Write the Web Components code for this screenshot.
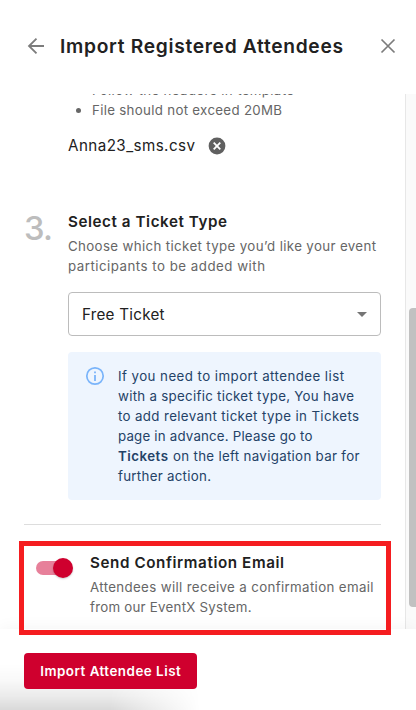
<!DOCTYPE html>
<html lang="en">
<head>
<meta charset="utf-8">
<title>Import Registered Attendees</title>
<style>
html,body{margin:0;height:100%;background:#fff;overflow:hidden}
body{font-family:Inter,"Liberation Sans",sans-serif;color:#212121}
</style>
</head>
<body>
<import-dialog></import-dialog>
<script>
function define(name, html, setup) {
  const template = document.createElement('template');
  template.innerHTML = html.trim();
  customElements.define(name, class extends HTMLElement {
    constructor() {
      super();
      this.attachShadow({ mode: 'open' }).append(template.content.cloneNode(true));
    }
    connectedCallback() { if (setup) setup(this); }
  });
}

// One line of text, tracked so that it spans the width in its "w" attribute.
define('text-line', `<style>:host{display:flex;white-space:pre;line-height:inherit}
span{display:block;flex:none}</style><span><slot></slot></span>`, el => {
  const span = el.shadowRoot.querySelector('span');
  const target = parseFloat(el.getAttribute('w'));
  const gaps = el.textContent.length - 1;
  const spacing = (target - span.getBoundingClientRect().width) / gaps;
  span.style.letterSpacing = spacing.toFixed(4) + 'px';
  span.style.marginRight = (-spacing).toFixed(4) + 'px';
});

define('dialog-header', `
<style>
:host{display:flex;align-items:center;box-sizing:border-box;height:94px;padding:0 18px 2px 26px;background:#fff;flex:none}
svg{display:block;flex:none;fill:none;stroke:#7c7c7c}
h1{margin:0 auto 0 14px;font-size:19.2px;font-weight:600;line-height:28px}
</style>
<svg width="20" height="20" viewBox="0 0 20 20" stroke-width="1.8"><path d="M18 10H3M10.5 2.6 3 10l7.5 7.4"/></svg>
<h1><slot></slot></h1>
<svg width="20" height="20" viewBox="0 0 20 20" stroke-width="1.7"><path d="m3.5 3.5 13 13m0-13-13 13"/></svg>`);

define('upload-notes', `
<style>
:host{display:block;margin-left:44px}
ul{margin:-14px 0 0;padding:0;list-style:none;font-size:13.3px;line-height:20px;color:#666}
li{display:flex;align-items:center;padding-left:8px;gap:11px}
li::before{content:"";width:5px;height:5px;border-radius:50%;background:#666}
.file{display:flex;align-items:center;gap:13px;margin-top:14px;height:24px;font-size:15.2px;line-height:24px}
svg{display:block}
</style>
<ul><li><text-line w="202">Follow the headers in template</text-line></li>
<li><text-line w="190">File should not exceed 20MB</text-line></li></ul>
<div class="file"><text-line w="127">Anna23_sms.csv</text-line>
<svg width="18" height="18" viewBox="0 0 18 18"><circle cx="9" cy="9" r="8.4" fill="#606060"/><path d="m5.7 5.7 6.6 6.6m0-6.6-6.6 6.6" stroke="#fff" stroke-width="1.8"/></svg></div>`);

define('form-step', `
<style>
:host{display:flex;margin-top:52px}
.n{width:44px;flex:none;font-size:32.8px;font-weight:500;line-height:36px;color:#bdbdbd}
.body{width:313px}
h2{margin:0;font-size:15.2px;font-weight:600;line-height:24px}
p{margin:2px 0 0;font-size:13.3px;line-height:20px;color:#666}
</style>
<div class="n"><text-line w="29">3.</text-line></div>
<div class="body"><h2><text-line w="159">Select a Ticket Type</text-line></h2>
<p><text-line w="308">Choose which ticket type you’d like your event</text-line><text-line w="197">participants to be added with</text-line></p>
<slot></slot></div>`);

define('select-field', `
<style>
:host{display:flex;align-items:center;justify-content:space-between;box-sizing:border-box;height:44px;margin-top:16px;padding:0 13px;border:1px solid #bcbcbc;border-radius:4px;font-size:15.2px}
svg{display:block}
</style>
<slot></slot><svg width="10" height="5" viewBox="0 0 10 5"><path d="M0 0h10L5 5z" fill="#757575"/></svg>`);

define('info-note', `
<style>
:host{display:flex;gap:13px;box-sizing:border-box;height:148px;margin-top:16px;padding:14px 17px;border-radius:4px;background:#eef5fe;color:#244267;font-size:13.3px;line-height:20px}
svg{display:block;flex:none}
.row{display:flex;gap:5px}
b{font-weight:600}
</style>
<svg width="20" height="20" viewBox="0 0 20 20"><circle cx="10" cy="10" r="8.2" fill="none" stroke="#7ab4fa" stroke-width="1.7"/><path d="M9.1 9h1.8v6H9.1zM9.1 5.4h1.8v1.8H9.1z" fill="#7ab4fa"/></svg>
<div><text-line w="226">If you need to import attendee list</text-line>
<text-line w="236">with a specific ticket type, You have</text-line>
<text-line w="241">to add relevant ticket type in Tickets</text-line>
<text-line w="194.5">page in advance. Please go to</text-line>
<div class="row"><b><text-line w="50">Tickets</text-line></b><text-line w="186.5">on the left navigation bar for</text-line></div>
<text-line w="93">further action.</text-line></div>`);

define('toggle-switch', `
<style>
:host{display:flex;align-items:center;justify-content:flex-end;width:37px;height:14px;border-radius:7px;background:linear-gradient(90deg,#e7809a 0 28px,transparent 28px)}
i{width:20px;height:20px;flex:none;border-radius:50%;background:#cf002e;box-shadow:0 1px 2px #0003}
</style><i></i>`);

define('email-option', `
<style>
:host{display:flex;gap:17px;margin-top:24px;padding:26px 0 0 12px;border-top:1px solid #ddd}
toggle-switch{margin-top:10px}
h2{margin:0;font-size:15.2px;font-weight:600;line-height:24px}
p{margin:2px 0 0;font-size:13.3px;line-height:20px;color:#666}
</style>
<toggle-switch></toggle-switch>
<div><h2><text-line w="194">Send Confirmation Email</text-line></h2>
<p><text-line w="283.5">Attendees will receive a confirmation email</text-line><text-line w="161.5">from our EventX System.</text-line></p></div>`);

define('scroll-track', `
<style>
:host{display:block;box-sizing:border-box;width:11px;flex:none;border-left:1px solid #e7e7e7;background:#fafafa;padding:214px 0 0 3px;overflow:hidden}
i{display:block;width:8px;height:299px;border-radius:4px 0 0 4px;background:#c1c1c1}
</style><i></i>`);

define('dialog-footer', `
<style>
:host{display:block;position:relative;box-sizing:border-box;height:81px;flex:none;padding:24px;background:#fff;box-shadow:0 0 16px #0000000d}
:host::before{content:"";position:absolute;left:0;bottom:0;width:200px;height:46px;
 background:linear-gradient(to top,#00000026,#00000014 30%,#00000006 65%,transparent);
 -webkit-mask-image:linear-gradient(90deg,#000 55%,#0008 75%,transparent);mask-image:linear-gradient(90deg,#000 55%,#0008 75%,transparent)}
button{position:relative;display:flex;align-items:center;justify-content:center;width:173px;height:36px;padding:0;border:0;border-radius:4px;background:#cf002e;color:#fff;font:600 13.4px/20px Inter,"Liberation Sans",sans-serif}
</style>
<button><text-line w="140.5">Import Attendee List</text-line></button>`);

define('highlight-frame', `
<style>:host{position:absolute;box-sizing:border-box;left:19px;top:541px;width:372px;height:94px;border:5px solid #f51d20}</style>`);

define('import-dialog', `
<style>
:host{display:flex;flex-direction:column;position:relative;width:416px;height:710px;overflow:hidden;background:#fff}
main{display:flex;height:535px;flex:none}
section{box-sizing:border-box;width:405px;height:535px;padding:0 24px;overflow:hidden}
</style>
<dialog-header><text-line w="283">Import Registered Attendees</text-line></dialog-header>
<main><section><upload-notes></upload-notes>
<form-step><select-field><text-line w="82.5">Free Ticket</text-line></select-field><info-note></info-note></form-step>
<email-option></email-option></section><scroll-track></scroll-track></main>
<dialog-footer></dialog-footer>
<highlight-frame></highlight-frame>`);
</script>
</body>
</html>
